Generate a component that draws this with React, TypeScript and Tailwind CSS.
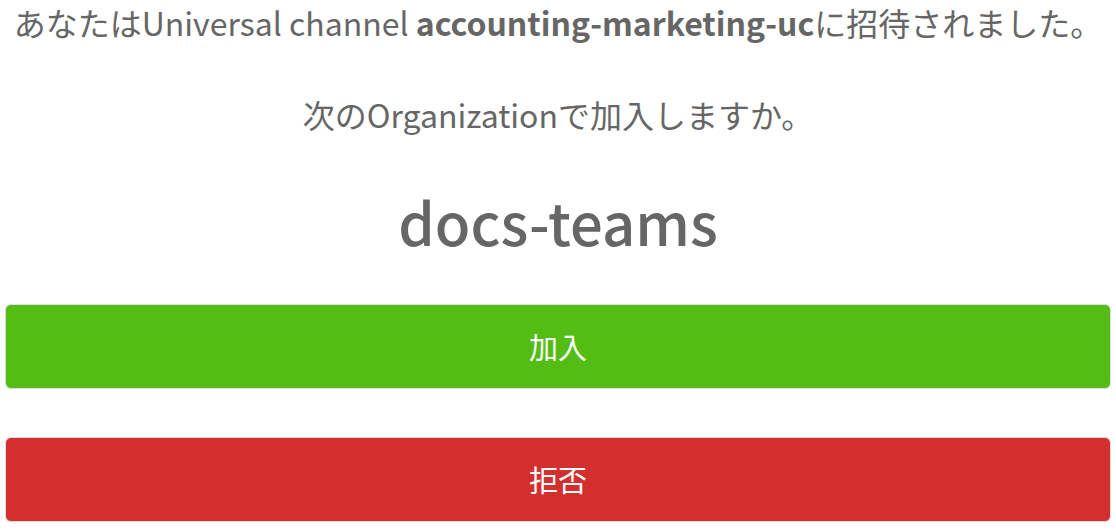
export default function App() {
  return (
    <div
      className="bg-white px-[5px] text-[#666666]"
      style={{ fontFamily: '"Noto Sans CJK JP", "Noto Sans", sans-serif' }}
    >
      <p className="whitespace-nowrap text-center text-[32px] leading-[45px]">
        あなたはUniversal channel <span className="font-bold">accounting-marketing-uc</span>に招待されました。
      </p>
      <p className="mt-[47px] text-center text-[32px] leading-[45px]">次のOrganizationで加入しますか。</p>
      <h1 className="mt-[49px] text-center text-[58px] font-medium leading-[70px]">docs-teams</h1>
      <div className="mt-[48px] flex flex-col gap-[48px]">
        <button className="h-[85px] w-full rounded-[6px] border border-[#dddddd] bg-[#54bd14] text-[29px] text-white">
          加入
        </button>
        <button className="h-[85px] w-full rounded-[6px] border border-[#dddddd] bg-[#d32f2f] text-[29px] text-white">
          拒否
        </button>
      </div>
    </div>
  );
}
